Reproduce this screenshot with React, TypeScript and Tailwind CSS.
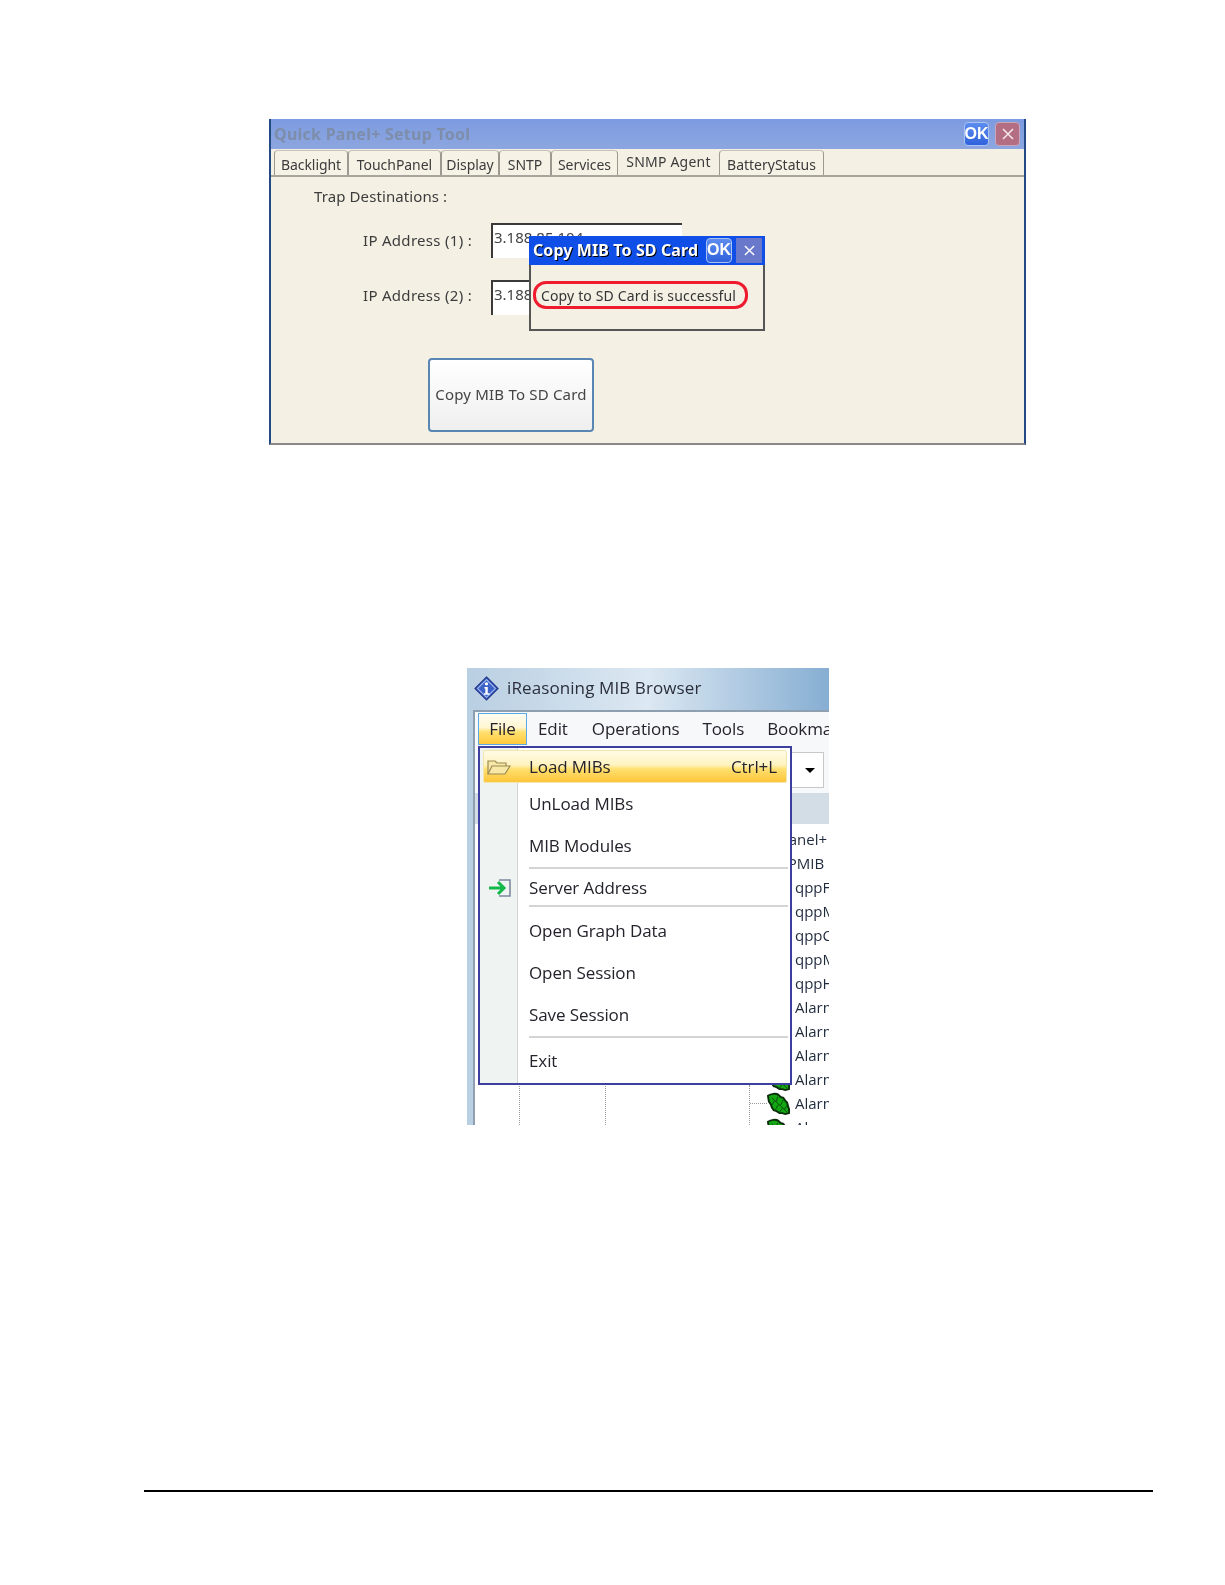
const tabs = [
  { label: 'Backlight', width: 'w-[74px]' },
  { label: 'TouchPanel', width: 'w-[93px]' },
  { label: 'Display', width: 'w-[58px]' },
  { label: 'SNTP', width: 'w-[52px]' },
  { label: 'Services', width: 'w-[67px]' },
];

const uiFont = "font-['Noto_Sans','DejaVu_Sans',sans-serif]";
const menuFont = "font-['Open_Sans','Noto_Sans',sans-serif]";

const treeLabels = [
  { label: 'QuickPanel+', offset: '-ml-[55px]' },
  { label: 'QPPMIB', offset: '-ml-[28px]' },
  { label: 'qppFile', offset: '' },
  { label: 'qppMonitor', offset: '' },
  { label: 'qppConfig', offset: '' },
  { label: 'qppManager', offset: '' },
  { label: 'qppHealth', offset: '' },
  { label: 'Alarm', offset: '' },
  { label: 'Alarm', offset: '' },
  { label: 'Alarm', offset: '' },
  { label: 'Alarm', offset: '' },
  { label: 'Alarm', offset: '' },
  { label: 'Alarm', offset: '' },
];

function OkButton({ className }: { className: string }) {
  return (
    <div className={`flex items-center justify-center rounded-sm border border-[#a9c4f2] bg-gradient-to-b from-[#5d8cf0] to-[#2f62dc] font-['Liberation_Sans',sans-serif] text-[16px] font-bold text-white ${className}`}>
      OK
    </div>
  );
}

function CloseGlyph({ className }: { className: string }) {
  return (
    <svg viewBox="0 0 12 12" className={className} fill="none" stroke="currentColor" strokeWidth="1.5">
      <path d="M1 1l10 10M11 1L1 11" />
    </svg>
  );
}

function IpRow({ label, height, textTop, labelShift }: { label: string; height: string; textTop: string; labelShift: string }) {
  return (
    <div className={`flex items-center ${height}`}>
      <span className={`w-[128px] pl-[92px] whitespace-nowrap text-[15px] tracking-[0.3px] text-[#3c3c3c] ${labelShift}`}>{label}</span>
      <div className={`ml-[92px] h-full w-[191px] overflow-hidden border-t-2 border-l-2 border-[#3a3a3a] bg-white pl-[1px] text-[15px] leading-[20px] text-[#444] ${textTop}`}>
        3.188.85.104
      </div>
    </div>
  );
}

function SetupWindow() {
  return (
    <div className={`relative ml-[269px] mt-[119px] h-[326px] w-[757px] border-x-2 border-b-2 border-x-[#244a86] border-b-[#888] bg-[#f4f0e4] blur-[0.35px] ${uiFont}`}>
      <div className="flex h-[30px] items-center bg-gradient-to-b from-[#7c9be0] to-[#8da6e0] pl-[3px] pr-[4px]">
        <span className="text-[16px] font-bold tracking-[0.25px] text-[#7d8daa]">Quick Panel+ Setup Tool</span>
        <OkButton className="ml-auto h-[24px] w-[25px]" />
        <div className="ml-[6px] flex h-[24px] w-[25px] items-center justify-center rounded-sm border border-[#c9a6bc] bg-[#b46e84] text-[#f4e8e8]">
          <CloseGlyph className="h-[12px] w-[12px]" />
        </div>
      </div>

      <div className="flex h-[28px] items-end border-b-2 border-[#a8a69c] pl-[3px]">
        {tabs.map((tab) => (
          <div key={tab.label} className={`flex h-[25px] items-center justify-center rounded-t-sm border-x border-t border-x-[#9c9a90] border-t-[#c4c2b8] bg-[#f6f2e6] pt-[3px] text-[14px] tracking-[-0.05px] text-[#3c3c3c] ${tab.width}`}>
            {tab.label}
          </div>
        ))}
        <div className="-mb-[2px] flex h-[27px] w-[101px] items-start justify-center pt-[1px] text-[14px] tracking-[0.2px] text-[#3c3c3c]">SNMP Agent</div>
        <div className="flex h-[25px] w-[105px] items-center justify-center rounded-t-sm border-x border-t border-x-[#9c9a90] border-t-[#c4c2b8] bg-[#f6f2e6] pt-[3px] text-[14px] text-[#3c3c3c]">BatteryStatus</div>
      </div>

      <p className="mt-[7px] pl-[43px] text-[15px] leading-[24px] tracking-[0.1px] text-[#3c3c3c]">Trap Destinations :</p>
      <div className="mt-[15px]">
        <IpRow label="IP Address (1) :" height="h-[35px]" textTop="pt-[2px]" labelShift="" />
      </div>
      <div className="mt-[22px]">
        <IpRow label="IP Address (2) :" height="h-[35px]" textTop="pt-[2px]" labelShift="pb-[4px]" />
      </div>
      <button className="ml-[157px] mt-[43px] flex h-[74px] w-[166px] items-center justify-center rounded-[4px] border-2 border-[#5a86b4] bg-gradient-to-b from-white to-[#efefef] pb-[2px] text-[15px] tracking-[0.2px] text-[#444]">
        Copy MIB To SD Card
      </button>

      <div className="absolute left-[258px] top-[117px] h-[95px] w-[236px] border-x-2 border-b-2 border-[#555] bg-[#f4f0e4]">
        <div className="-mx-[2px] flex h-[29px] items-center bg-[#0f4fe8] pb-[1px] pl-[4px] pr-[3px]">
          <span className="text-[16px] font-bold tracking-[0.1px] whitespace-nowrap text-white [text-shadow:1px_1px_0_#000]">Copy MIB To SD Card</span>
          <OkButton className="ml-auto h-[25px] w-[26px] shrink-0" />
          <div className="ml-[4px] flex h-[25px] w-[26px] shrink-0 items-center justify-center bg-[#6a78cc] text-white">
            <CloseGlyph className="h-[11px] w-[11px]" />
          </div>
        </div>
        <div className="mt-[16px] ml-[2px] flex h-[28px] w-[215px] items-center justify-center rounded-[13px] border-[3px] border-[#ee1c2e] pr-[4px] text-[14px] tracking-[0.15px] whitespace-nowrap text-[#333]">
          Copy to SD Card is successful
        </div>
      </div>
    </div>
  );
}

function Leaf({ className }: { className: string }) {
  return (
    <svg viewBox="0 0 24 24" className={className}>
      <path d="M1 4c3-2 8-3 11-1l2 2 3 1 2 3 2 2 1 4 1 3v4l-4 1-3-1-3 0-3-2-3-1-2-3-1-3-2-3z" fill="#12a812" stroke="#0a2e0a" strokeWidth="2" />
      <path d="M5 6l16 15M10 10l1-5M14 14l3-6M18 18l3-4M8 9l-3 5M12 13l-3 5M16 17l-3 4" stroke="#0a4a0a" strokeWidth="1" fill="none" />
    </svg>
  );
}

function MenuRow({ label, height, icon }: { label: string; height: string; icon?: React.ReactNode }) {
  return (
    <div className={`flex items-center ${height}`}>
      <div className="flex h-full w-[40px] shrink-0 items-center justify-center">{icon}</div>
      <span className="pl-[9px] text-[17px] tracking-[-0.1px] text-[#26222c]">{label}</span>
    </div>
  );
}

function Separator() {
  return <div className="ml-[49px] mr-[2px] h-[2px] bg-[#d4d4d4]" />;
}

function BrowserWindow() {
  return (
    <div className={`relative ml-[467px] mt-[223px] h-[457px] w-[362px] overflow-hidden bg-gradient-to-r from-[#b9cfe2] via-[#dce8f2] to-[#86aed2] blur-[0.35px] ${menuFont}`}>
      <div className="flex h-[42px] items-center pb-[2px] pl-[7px]">
        <svg viewBox="0 0 24 24" className="h-[25px] w-[25px]">
          <path d="M12 1l11 11-11 11L1 12z" fill="#3c62c8" stroke="#24388a" strokeWidth="1.2" />
          <path d="M12 3.5l8.5 8.5-8.5 8.5L3.5 12z" fill="none" stroke="#a9c0f0" strokeWidth="1" />
          <circle cx="12" cy="7.5" r="1.6" fill="#fff" />
          <path d="M10 10.5h3.2v6H15v1.4H9.6v-1.4h1.3v-4.6H10z" fill="#fff" />
        </svg>
        <span className="ml-[8px] text-[17px] tracking-[0.1px] whitespace-nowrap text-[#2b2f3c]">iReasoning MIB Browser</span>
      </div>

      <div className="ml-[6px] h-[415px] border-t-2 border-l-2 border-[#8ea0b0] bg-white">
        <div className="flex h-[34px] items-center overflow-hidden bg-[#f7f8f9] pl-[3px] text-[17px] tracking-[-0.1px] text-[#26222c]">
          <div className="flex h-[32px] w-[49px] shrink-0 items-center justify-center border border-[#5aa8e8] bg-[linear-gradient(#fffdf2_0%,#fff6d0_45%,#ffe070_60%,#ffc93c_100%)]">File</div>
          <span className="ml-[11px] shrink-0">Edit</span>
          <span className="ml-[24px] shrink-0">Operations</span>
          <span className="ml-[23px] shrink-0">Tools</span>
          <span className="ml-[23px] shrink-0 whitespace-nowrap">Bookmarks</span>
        </div>
        <div className="flex h-[47px] justify-end bg-[#f7f8f9] pr-[5px] pt-[6px]">
          <div className="flex h-[36px] w-[35px] items-center justify-center border border-[#c8c8c8] bg-white pl-[6px]">
            <div className="h-0 w-0 border-x-[5px] border-t-[5px] border-x-transparent border-t-black" />
          </div>
        </div>
        <div className="h-[31px] bg-[#d3dde6]" />
        <div className="pl-[320px] pt-[3px] text-[15px] leading-[24px] text-[#1f2a3c]">
          {treeLabels.map((row, index) => (
            <div key={index} className={`whitespace-nowrap ${row.offset}`}>{row.label}</div>
          ))}
        </div>
      </div>

      <div className="absolute bottom-0 left-[52px] h-[42px] border-l border-dotted border-[#999]" />
      <div className="absolute bottom-0 left-[138px] h-[42px] border-l border-dotted border-[#999]" />
      <div className="absolute bottom-0 left-[282px] h-[40px] border-l border-dotted border-[#999]" />
      <div className="absolute bottom-[21px] left-[283px] w-[17px] border-t border-dotted border-[#999]" />
      <Leaf className="absolute bottom-[34px] left-[300px] h-[23px] w-[23px]" />
      <Leaf className="absolute bottom-[10px] left-[300px] h-[23px] w-[23px]" />
      <Leaf className="absolute -bottom-[16px] left-[300px] h-[23px] w-[23px]" />

      <div className="absolute left-[11px] top-[78px] h-[339px] w-[314px] border-2 border-[#3d3f9f] bg-white">
        <div className="absolute inset-y-0 left-0 w-[38px] border-r border-[#cfd4d2] bg-[#eff3f2]" />
        <div className="relative">
          <div className="mx-[3px] mt-[2px] flex h-[33px] items-center rounded-[2px] border border-[#f2e6b0] bg-[linear-gradient(#fffbe6_0%,#fff3c0_45%,#ffe070_58%,#fdc53a_100%)] pr-[9px] text-[17px] tracking-[-0.1px] text-[#26222c]">
            <svg viewBox="0 0 24 18" className="ml-[3px] h-[18px] w-[24px]" fill="#f7e8a8" stroke="#9a8a50" strokeWidth="1.2">
              <path d="M1 16V3h7l2 2h9v3" />
              <path d="M1 16l4-8h18l-5 8z" />
            </svg>
            <span className="ml-[18px]">Load MIBs</span>
            <span className="ml-auto">Ctrl+L</span>
          </div>
          <MenuRow label="UnLoad MIBs" height="h-[42px]" />
          <MenuRow label="MIB Modules" height="h-[42px]" />
          <Separator />
          <MenuRow
            label="Server Address"
            height="h-[36px] pt-[1px]"
            icon={
              <svg viewBox="0 0 24 20" className="h-[20px] w-[24px]" fill="none">
                <path d="M11 2h11v16H11" stroke="#7c8a9c" strokeWidth="1.6" />
                <path d="M1 10h14M10 4l6 6-6 6" stroke="#14b84a" strokeWidth="3" />
              </svg>
            }
          />
          <Separator />
          <MenuRow label="Open Graph Data" height="mt-[3px] h-[42px]" />
          <MenuRow label="Open Session" height="h-[42px]" />
          <MenuRow label="Save Session" height="h-[42px]" />
          <Separator />
          <MenuRow label="Exit" height="h-[45px]" />
        </div>
      </div>
    </div>
  );
}

export default function App() {
  return (
    <div className="flex h-[1585px] w-[1225px] flex-col overflow-hidden bg-white">
      <SetupWindow />
      <BrowserWindow />
      <div className="ml-[144px] mt-[365px] h-[2px] w-[1009px] bg-black" />
    </div>
  );
}
